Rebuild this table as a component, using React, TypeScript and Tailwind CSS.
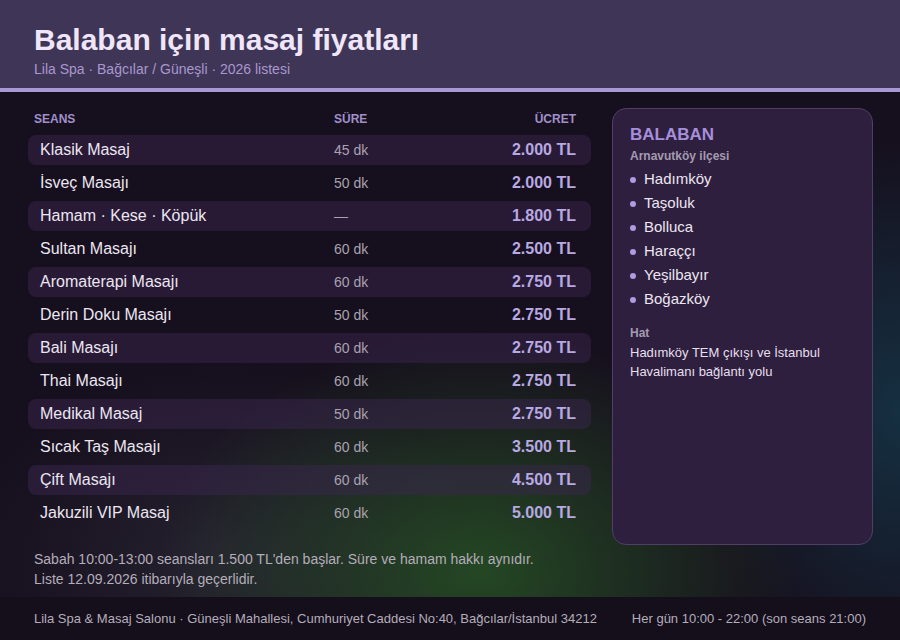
import React from "react";

const seanslar = [
  { ad: "Klasik Masaj", sure: "45 dk", ucret: "2.000 TL" },
  { ad: "İsveç Masajı", sure: "50 dk", ucret: "2.000 TL" },
  { ad: "Hamam · Kese · Köpük", sure: "—", ucret: "1.800 TL" },
  { ad: "Sultan Masajı", sure: "60 dk", ucret: "2.500 TL" },
  { ad: "Aromaterapi Masajı", sure: "60 dk", ucret: "2.750 TL" },
  { ad: "Derin Doku Masajı", sure: "50 dk", ucret: "2.750 TL" },
  { ad: "Bali Masajı", sure: "60 dk", ucret: "2.750 TL" },
  { ad: "Thai Masajı", sure: "60 dk", ucret: "2.750 TL" },
  { ad: "Medikal Masaj", sure: "50 dk", ucret: "2.750 TL" },
  { ad: "Sıcak Taş Masajı", sure: "60 dk", ucret: "3.500 TL" },
  { ad: "Çift Masajı", sure: "60 dk", ucret: "4.500 TL" },
  { ad: "Jakuzili VIP Masaj", sure: "60 dk", ucret: "5.000 TL" },
];

const mahalleler = ["Hadımköy", "Taşoluk", "Bolluca", "Haraççı", "Yeşilbayır", "Boğazköy"];

const App = () => {
  return (
    <div className="w-[900px] h-[640px] flex flex-col overflow-hidden bg-[#160f1d] font-['Liberation_Sans',Arial,sans-serif]">
      <header className="h-[92px] shrink-0 bg-[#3f3556] border-b-4 border-[#a898d4] px-[34px] pt-[22px]">
        <h1 className="text-[30px] leading-[36px] font-bold text-[#efe6fa]">Balaban için masaj fiyatları</h1>
        <p className="text-[14px] leading-[20px] text-[#a898cf] mt-[1px]">Lila Spa · Bağcılar / Güneşli · 2026 listesi</p>
      </header>

      <div className="flex-1 flex flex-col bg-[radial-gradient(ellipse_320px_240px_at_480px_480px,rgba(42,95,38,0.7),transparent),radial-gradient(ellipse_200px_280px_at_900px_320px,rgba(20,75,95,0.55),transparent),radial-gradient(ellipse_260px_200px_at_220px_470px,rgba(55,55,70,0.45),transparent)]">
        <main className="flex-1 flex gap-[21px] pl-[28px] pr-[27px] pt-[16px]">
          <section className="w-[563px] flex flex-col">
            <div className="grid grid-cols-[300px_1fr_auto] pl-[6px] pr-[15px] pt-[1px] text-[12px] leading-[20px] font-bold text-[#a090cc] mb-[6px]">
              <span>SEANS</span>
              <span>SÜRE</span>
              <span className="text-right">ÜCRET</span>
            </div>
            <div className="flex flex-col gap-[3px]">
              {seanslar.map((s, i) => (
                <div
                  key={s.ad}
                  className={
                    "h-[30px] rounded-[8px] grid grid-cols-[294px_1fr_auto] items-center pl-[12px] pr-[15px] " +
                    (i % 2 === 0 ? "bg-[rgba(58,38,78,0.5)]" : "")
                  }
                >
                  <span className="text-[16px] text-[#ece6f2]">{s.ad}</span>
                  <span className="text-[14px] text-[#a9a2b0]">{s.sure}</span>
                  <span className="text-[16px] font-bold text-[#b9a9e3] text-right">{s.ucret}</span>
                </div>
              ))}
            </div>
          </section>

          <aside className="w-[261px] h-[437px] rounded-[14px] border border-[#4f3f66] bg-[#2e1f3e] px-[17px] pt-[16px]">
            <h2 className="text-[17px] leading-[20px] font-bold text-[#a68fda]">BALABAN</h2>
            <p className="text-[12px] leading-[16px] font-bold text-[#a49bb0] mt-[3px]">Arnavutköy ilçesi</p>
            <ul className="mt-[3px] flex flex-col">
              {mahalleler.map((m) => (
                <li key={m} className="flex items-center gap-[8px] h-[24px] text-[15px] text-[#ece6f2]">
                  <span className="w-[6px] h-[6px] rounded-full bg-[#b09ae0] mt-[2px]" />
                  {m}
                </li>
              ))}
            </ul>
            <p className="text-[12px] leading-[16px] font-bold text-[#a49bb0] mt-[14px]">Hat</p>
            <p className="text-[13px] leading-[19px] text-[#e6dfee] mt-[2px]">
              Hadımköy TEM çıkışı ve İstanbul Havalimanı bağlantı yolu
            </p>
          </aside>
        </main>

        <div className="px-[34px] pb-[8px] text-[14px] leading-[20px] text-[#b4adba]">
          <p>Sabah 10:00-13:00 seansları 1.500 TL'den başlar. Süre ve hamam hakkı aynıdır.</p>
          <p>Liste 12.09.2026 itibarıyla geçerlidir.</p>
        </div>
      </div>

      <footer className="h-[43px] shrink-0 bg-[#150f1c] flex items-center justify-between pl-[34px] pr-[34px] text-[13px] text-[#b4adba]">
        <span>Lila Spa &amp; Masaj Salonu · Güneşli Mahallesi, Cumhuriyet Caddesi No:40, Bağcılar/İstanbul 34212</span>
        <span>Her gün 10:00 - 22:00 (son seans 21:00)</span>
      </footer>
    </div>
  );
};

export default App;
